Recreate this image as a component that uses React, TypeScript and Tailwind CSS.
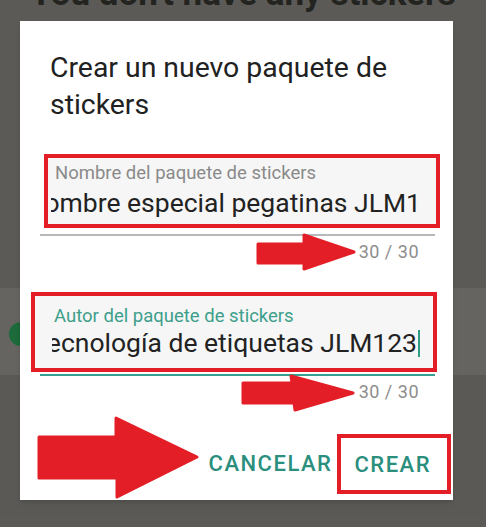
import React from "react";

const RED = "#e41e26";

function Counter(): React.ReactElement {
    return (
        <div className="mt-[5px] flex justify-end pr-[34px]">
            <span className="text-[18px] leading-[22px] tracking-[0.5px] text-[#8d8d8d]">30 / 30</span>
        </div>
    );
}

function Arrows(): React.ReactElement {
    return (
        <svg className="absolute inset-0 pointer-events-none" width="486" height="527" viewBox="0 0 486 527">
            <g fill={RED} stroke={RED} strokeWidth="3" strokeLinejoin="round">
                <polygon points="258,244 304,244 304,235 354,252 304,269 304,263 258,263" />
                <polygon points="243,383 292,383 291,376 353,393 295,410 294,403 243,403" />
                <polygon points="39,437 116,437 116,418 197,457 117,497 117,478 39,478" />
            </g>
        </svg>
    );
}

export default function App(): React.ReactElement {
    return (
        <div
            className="relative w-[486px] h-[527px] overflow-hidden bg-[#5b5a56]"
            style={{ fontFamily: "Roboto, 'Noto Sans', sans-serif" }}
        >
            {/* page behind the scrim */}
            <div className="flex flex-col">
                <p className="mt-[-26px] text-center text-[35px] leading-[40px] font-bold text-[#23231f]">
                    You don&apos;t have any stickers
                </p>
                <div className="mt-[274px] h-[87px] bg-[#656460] flex items-center">
                    <div className="ml-[9px] mt-[4px] w-[24px] h-[24px] rounded-full bg-[#1d6a3a]" />
                </div>
                <div className="h-[140px] bg-[#5a5955]" />
                <div className="flex-1 bg-[#52514d]" />
            </div>

            {/* dialog */}
            <div className="absolute left-[20px] top-[21px] w-[433px] bg-white shadow-md flex flex-col">
                <h2 className="pt-[28px] px-[30px] text-[28.4px] leading-[37px] text-[#212121] font-normal">
                    Crear un nuevo paquete de stickers
                </h2>

                <div className="mt-[31px] ml-[24px] w-[396px] border-4 border-[#e41e26] bg-[#f6f6f6] flex flex-col">
                    <span className="mt-[5px] pl-[7px] text-[18.5px] leading-[20px] text-[#8a8a8a]">
                        Nombre del paquete de stickers
                    </span>
                    <div className="mt-[4px] mb-[5px] ml-[3px] mr-[15px] overflow-hidden flex justify-end">
                        <span className="whitespace-nowrap text-[26.5px] leading-[32px] text-[#222222]">
                            Nombre especial pegatinas JLM1
                        </span>
                    </div>
                </div>
                <div className="mt-[6px] ml-[20px] w-[395px] h-[2px] bg-[#b8b8b8]" />
                <Counter />

                <div className="mt-[29px] ml-[11px] w-[406px] border-4 border-[#e41e26] bg-[#f6f6f6] flex flex-col">
                    <span className="mt-[10px] pl-[19px] text-[18.5px] leading-[20px] text-[#3d9f8b]">
                        Autor del paquete de stickers
                    </span>
                    <div className="mt-[1px] mb-[9px] ml-[17px] mr-[13px] overflow-hidden flex justify-end items-center">
                        <span className="whitespace-nowrap text-[26.5px] leading-[32px] text-[#222222]">
                            Tecnología de etiquetas JLM123
                        </span>
                        <span className="ml-[1px] w-[2px] h-[27px] shrink-0 bg-[#2f9c88]" />
                    </div>
                </div>
                <div className="mt-[2px] ml-[20px] w-[395px] h-[2px] bg-[#35a08f]" />
                <Counter />

                <div className="mt-[31px] mb-[6px] pr-[2px] flex justify-end items-center">
                    <span className="mr-[5px] text-[22px] leading-[26px] font-medium tracking-[1.5px] text-[#2a8f7d]">
                        CANCELAR
                    </span>
                    <div className="border-4 border-[#e41e26] pl-[13px] pr-[16px] pt-[14px] pb-[12px]">
                        <span className="block text-[22px] leading-[26px] font-medium tracking-[1.5px] text-[#2a8f7d]">
                            CREAR
                        </span>
                    </div>
                </div>
            </div>

            <Arrows />
        </div>
    );
}
